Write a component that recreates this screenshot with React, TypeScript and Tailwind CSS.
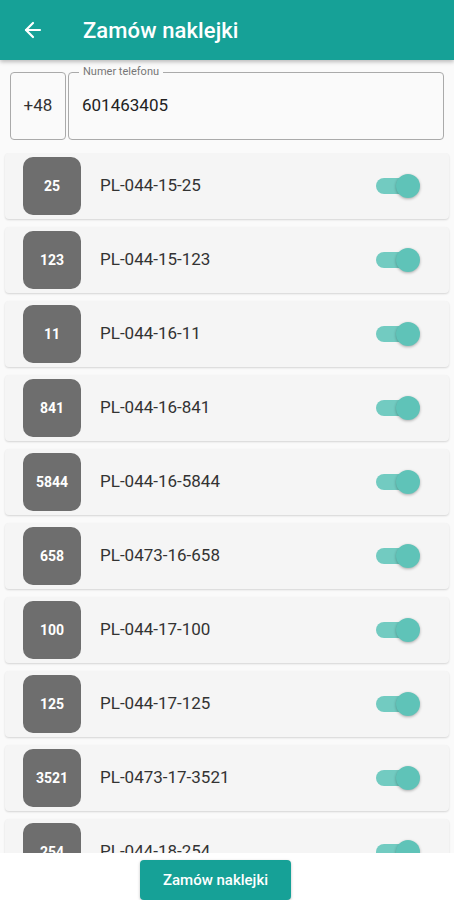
import { ArrowLeft } from 'lucide-react';

const stickers = [
  { id: '25', code: 'PL-044-15-25' },
  { id: '123', code: 'PL-044-15-123' },
  { id: '11', code: 'PL-044-16-11' },
  { id: '841', code: 'PL-044-16-841' },
  { id: '5844', code: 'PL-044-16-5844' },
  { id: '658', code: 'PL-0473-16-658' },
  { id: '100', code: 'PL-044-17-100' },
  { id: '125', code: 'PL-044-17-125' },
  { id: '3521', code: 'PL-0473-17-3521' },
  { id: '254', code: 'PL-044-18-254' },
];

function Toggle() {
  return (
    <div className="relative w-[44px] h-[24px]">
      <div className="absolute left-0 top-[4px] w-[40px] h-[16px] rounded-full bg-[#72cbc1]" />
      <div className="absolute right-0 top-0 w-[24px] h-[24px] rounded-full bg-[#5fc3b8] shadow-[0_1px_3px_rgba(0,0,0,0.3)]" />
    </div>
  );
}

export default function App() {
  return (
    <div
      className="w-[454px] h-[900px] flex flex-col bg-[#fafafa] overflow-hidden"
      style={{ fontFamily: 'Roboto, "Noto Sans", sans-serif' }}
    >
      {/* Toolbar */}
      <header className="relative z-10 h-[60px] shrink-0 flex items-center bg-[#16a197] text-white shadow-[0_2px_4px_rgba(0,0,0,0.25)]">
        <ArrowLeft className="ml-[21px] w-[24px] h-[24px]" strokeWidth={2.2} />
        <h1 className="ml-[38px] text-[22px] font-medium tracking-[0.1px]">Zamów naklejki</h1>
      </header>

      {/* Phone input */}
      <div className="mt-[12px] mx-[10px] h-[68px] shrink-0 flex gap-[2px]">
        <div className="w-[56px] rounded-[4px] border border-[#aaaaaa] flex items-center justify-center text-[17px] text-[#333]">
          +48
        </div>
        <div className="relative flex-1 rounded-[4px] border border-[#aaaaaa] flex items-center pl-[13px] text-[17px] text-[#222]">
          <span className="absolute -top-[8px] left-[10px] px-[4px] bg-[#fafafa] text-[11px] leading-[14px] text-[#777]">
            Numer telefonu
          </span>
          601463405
        </div>
      </div>

      {/* Sticker list */}
      <div className="flex-1 min-h-0 overflow-hidden mt-[13px] px-[5px] flex flex-col gap-[8px]">
        {stickers.map((s) => (
          <div
            key={s.id}
            className="h-[66px] shrink-0 flex items-center rounded-[4px] bg-[#f5f5f5] shadow-[0_1px_2px_rgba(0,0,0,0.15)] pl-[18px] pr-[29px]"
          >
            <div className="w-[58px] h-[58px] rounded-[10px] bg-[#6e6e6e] flex items-center justify-center text-white text-[14px] font-bold">
              {s.id}
            </div>
            <span className="ml-[19px] flex-1 text-[17px] text-[#333]">{s.code}</span>
            <Toggle />
          </div>
        ))}
      </div>

      {/* Footer */}
      <div className="h-[47px] shrink-0 bg-white flex pl-[140px] pt-[7px]">
        <button className="w-[151px] h-[40px] rounded-[4px] bg-[#16a197] text-white text-[15px] font-medium shadow-[0_1px_3px_rgba(0,0,0,0.25)]">
          Zamów naklejki
        </button>
      </div>
    </div>
  );
}
